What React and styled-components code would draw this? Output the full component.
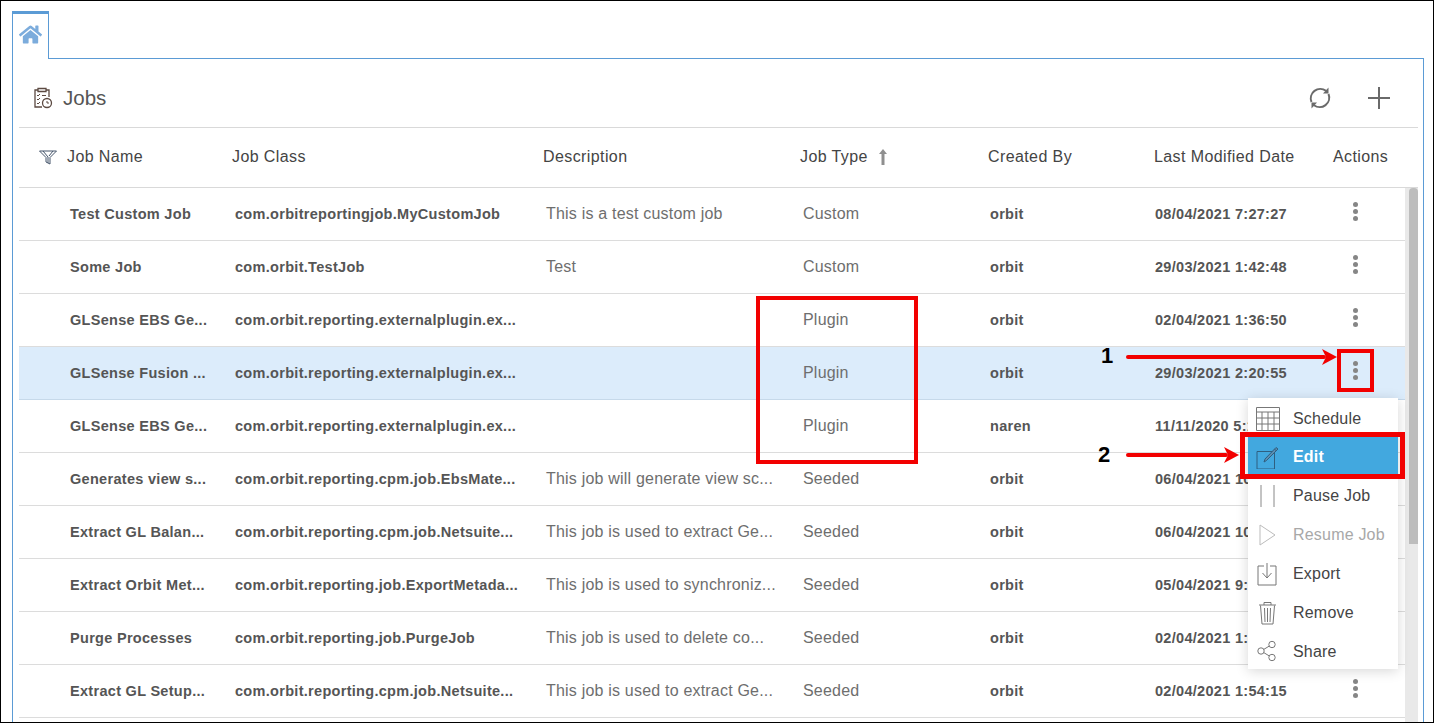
import styled, { createGlobalStyle } from 'styled-components'
import { FaHome } from 'react-icons/fa'

const GlobalStyle = createGlobalStyle`
  html, body { margin: 0; padding: 0; background: #fff; }
  * { box-sizing: border-box; }
`

const COLUMNS = '48px 165px 311px 257px 188px 166px 179px 1fr'
const RED = '#f20000'

const Page = styled.div`
  position: relative;
  width: 1434px;
  height: 723px;
  overflow: hidden;
  border: 1px solid #000;
  padding: 10px 9px 0 11px;
  font-family: "Liberation Sans", Arial, sans-serif;
  background: #fff;
`
const TabStrip = styled.div`
  display: flex;
  height: 48px;
`
const Tab = styled.div`
  position: relative;
  z-index: 1;
  width: 37px;
  height: 48px;
  background: #fff;
  border: 1px solid #5b9bd5;
  border-top-width: 3px;
  border-bottom: none;
  display: flex;
  justify-content: center;
  padding-top: 9px;
  color: #7cacdc;
  font-size: 23px;
`
const Panel = styled.div`
  margin-top: -1px;
  height: 680px;
  border: 1px solid #5b9bd5;
  border-bottom: none;
  padding: 0 5px 0 6px;
`
const TitleBar = styled.div`
  height: 69px;
  display: flex;
  align-items: center;
  border-bottom: 1px solid #d9d9d9;
  padding: 10px 27px 0 14px;
`
const Title = styled.h1`
  margin: 0 0 0 10px;
  font-size: 20.5px;
  font-weight: 400;
  color: #555;
  flex: 1;
`
const ToolButton = styled.span`
  display: flex;
  margin-left: 35px;
`
const HeaderRow = styled.div`
  display: grid;
  grid-template-columns: ${COLUMNS};
  height: 60px;
  align-items: center;
  border-bottom: 1px solid #d9d9d9;
  padding-bottom: 2px;
  font-size: 16px;
  letter-spacing: 0.4px;
  color: #444;
`
const FilterCell = styled.div`
  display: flex;
  justify-content: flex-end;
  padding: 2px 10px 0 0;
`
const HeadCell = styled.div`
  display: flex;
  align-items: center;
  gap: 10px;
  white-space: nowrap;
`
const Body = styled.div`
  display: flex;
  align-items: flex-start;
`
const Rows = styled.div`
  flex: 1;
  min-width: 0;
`
const Row = styled.div`
  display: grid;
  grid-template-columns: ${COLUMNS};
  height: 53px;
  align-items: center;
  border-bottom: 1px solid ${({ $active }) => ($active ? '#c6d9ea' : '#dcdcdc')};
  background: ${({ $active }) => ($active ? '#dcecfb' : 'transparent')};
`
const Cell = styled.div`
  padding-left: ${({ $inset = 3 }) => $inset}px;
  white-space: nowrap;
  overflow: hidden;
  font-size: 14.5px;
  font-weight: 700;
  letter-spacing: 0.3px;
  color: #555;
`
const PlainCell = styled(Cell)`
  font-size: 16px;
  font-weight: 400;
  letter-spacing: 0.2px;
  color: #6e6e6e;
`
const DotsCell = styled.div`
  display: flex;
  justify-content: flex-start;
  padding: 0 0 5px 20px;
`
const Dots = styled.span`
  display: flex;
  flex-direction: column;
  gap: 2px;
  i {
    width: 5px;
    height: 5px;
    border-radius: 50%;
    background: #868686;
  }
`
const ScrollTrack = styled.div`
  width: 13px;
  height: 535px;
  background: #e9e9e9;
  display: flex;
  justify-content: flex-end;
`
const ScrollThumb = styled.div`
  width: 9px;
  height: 356px;
  background: #bdbdbd;
  border-radius: 4px 4px 0 0;
`
const Menu = styled.div`
  position: absolute;
  left: 1247px;
  top: 397px;
  width: 150px;
  height: 271px;
  background: #fff;
  box-shadow: 0 2px 12px rgba(0, 0, 0, 0.16);
  z-index: 3;
`
const MenuItem = styled.div`
  height: ${({ $active }) => ($active ? '38px' : '39px')};
  display: flex;
  align-items: center;
  padding: ${({ $active }) => ($active ? '1px' : '2px')} 0 0 8px;
  gap: 13px;
  font-size: 16px;
  letter-spacing: 0.2px;
  font-weight: ${({ $active }) => ($active ? 700 : 400)};
  color: ${({ $active, $disabled }) => ($active ? '#fff' : $disabled ? '#a8a8a8' : '#444')};
  background: ${({ $active }) => ($active ? '#42a8df' : 'transparent')};
`
const MenuIcon = styled.span`
  width: 24px;
  height: 24px;
  display: flex;
  flex: none;
  color: ${({ $tone }) => $tone};
`
const RedBox = styled.div`
  position: absolute;
  left: ${({ $x }) => $x}px;
  top: ${({ $y }) => $y}px;
  width: ${({ $w }) => $w}px;
  height: ${({ $h }) => $h}px;
  border: ${({ $t }) => $t}px solid ${RED};
  z-index: 4;
`
const Arrow = styled.svg`
  position: absolute;
  left: ${({ $x }) => $x}px;
  top: ${({ $y }) => $y}px;
  z-index: 4;
`
const Marker = styled.span`
  position: absolute;
  left: ${({ $x }) => $x}px;
  top: ${({ $y }) => $y}px;
  font-size: 22px;
  line-height: 24px;
  font-weight: 700;
  color: #000;
  z-index: 4;
`

const ClipboardIcon = () => (
  <svg width="20" height="22" viewBox="0 0 20 22" fill="none" stroke="#5c4a42" strokeWidth="1.3">
    <path d="M5 3H2v17h7M13 3h3v7" />
    <path d="M5 1.500h8v3H5z" />
    <path d="M4 8l1 1 2-2M4 12l1 1 2-2M4 16l1 1 2-2M9 8.500h4" strokeWidth="1" />
    <circle cx="14" cy="16" r="4.500" />
    <path d="M14 14v2h2" strokeWidth="1" />
  </svg>
)
const RefreshIcon = () => (
  <svg width="24" height="24" viewBox="0 0 24 24" fill="none" stroke="#6a6a6a" strokeWidth="2">
    <path d="M3.500 16A9.500 9.500 0 0 1 18 4.800" />
    <path d="M20.500 8A9.500 9.500 0 0 1 6 19.200" />
    <path d="M20.500 1.500v6h-5.500z" fill="#6a6a6a" stroke="none" />
    <path d="M3.500 22.500v-6H9z" fill="#6a6a6a" stroke="none" />
  </svg>
)
const PlusIcon = () => (
  <svg width="24" height="24" viewBox="0 0 24 24" stroke="#6a6a6a" strokeWidth="2">
    <path d="M1 12h22M12 1v22" />
  </svg>
)
const FilterIcon = () => (
  <svg width="18" height="15" viewBox="0 0 18 15" fill="none" stroke="#44546a" strokeWidth="1">
    <path d="M.5 1h17l-6.500 6.500V14l-4-2V7.500z" />
    <path d="M4 1l5 6v6M14 1l-4 5" />
  </svg>
)
const SortUp = () => (
  <svg width="10" height="16" viewBox="0 0 10 16" fill="#8f8f8f">
    <path d="M5 0l4 5H6.500v11h-3V5H1z" />
  </svg>
)

const Glyph = ({ children }) => (
  <svg width="24" height="24" viewBox="0 0 24 24" fill="none" stroke="currentColor" strokeWidth="1">
    {children}
  </svg>
)

const menuItems = [
  {
    label: 'Schedule',
    tone: '#777',
    icon: <path d="M.5.500h23v23H.5zM.5 5h23M.5 11h23M.5 17h23M6 5v18.500M12 5v18.500M18 5v18.500" />,
  },
  {
    label: 'Edit',
    tone: '#2f5f80',
    active: true,
    icon: (
      <>
        <path d="M1 6.500h17.500V24H1z" />
        <path d="M8 17l1-3L20 2.500l2 1.500L10.500 15.500zM18.500 4l2 2" fill="#5b8fb3" />
      </>
    ),
  },
  { label: 'Pause Job', tone: '#888', icon: <path d="M5 1v22M18 1v22" /> },
  { label: 'Resume Job', tone: '#bbb', disabled: true, icon: <path d="M4 2l15 10L4 22z" /> },
  { label: 'Export', tone: '#777', icon: <path d="M8 4H2v19h18V4h-6M11 1v15M6.500 11l4.500 5 4.500-5" /> },
  {
    label: 'Remove',
    tone: '#777',
    icon: <path d="M3 4h17M8 4V1.500h7V4M4.500 4.500L6 23h11l1.500-18.500M8.500 7l.5 14M11.500 7v14M14.500 7l-.5 14" />,
  },
  {
    label: 'Share',
    tone: '#777',
    icon: (
      <>
        <circle cx="5" cy="11" r="3.200" />
        <circle cx="16" cy="4.500" r="3.200" />
        <circle cx="16" cy="17.500" r="3.200" />
        <path d="M7.800 9.400l5.400-3.300M7.800 12.600l5.400 3.300" />
      </>
    ),
  },
]

const jobs = [
  ['Test Custom Job', 'com.orbitreportingjob.MyCustomJob', 'This is a test custom job', 'Custom', 'orbit', '08/04/2021 7:27:27'],
  ['Some Job', 'com.orbit.TestJob', 'Test', 'Custom', 'orbit', '29/03/2021 1:42:48'],
  ['GLSense EBS Ge...', 'com.orbit.reporting.externalplugin.ex...', '', 'Plugin', 'orbit', '02/04/2021 1:36:50'],
  ['GLSense Fusion ...', 'com.orbit.reporting.externalplugin.ex...', '', 'Plugin', 'orbit', '29/03/2021 2:20:55'],
  ['GLSense EBS Ge...', 'com.orbit.reporting.externalplugin.ex...', '', 'Plugin', 'naren', '11/11/2020 5:12:40'],
  ['Generates view s...', 'com.orbit.reporting.cpm.job.EbsMate...', 'This job will generate view sc...', 'Seeded', 'orbit', '06/04/2021 10:12:31'],
  ['Extract GL Balan...', 'com.orbit.reporting.cpm.job.Netsuite...', 'This job is used to extract Ge...', 'Seeded', 'orbit', '06/04/2021 10:05:12'],
  ['Extract Orbit Met...', 'com.orbit.reporting.job.ExportMetada...', 'This job is used to synchroniz...', 'Seeded', 'orbit', '05/04/2021 9:20:44'],
  ['Purge Processes', 'com.orbit.reporting.job.PurgeJob', 'This job is used to delete co...', 'Seeded', 'orbit', '02/04/2021 1:54:30'],
  ['Extract GL Setup...', 'com.orbit.reporting.cpm.job.Netsuite...', 'This job is used to extract Ge...', 'Seeded', 'orbit', '02/04/2021 1:54:15'],
]

const RedArrow = ({ x, y, width }) => (
  <Arrow $x={x} $y={y} width={width} height="16" viewBox={`0 0 ${width} 16`}>
    <path d={`M2 8H${width - 13}`} stroke={RED} strokeWidth="4" strokeLinecap="round" />
    <path d={`M${width - 15} 0L${width} 8L${width - 15} 16L${width - 11} 8z`} fill={RED} />
  </Arrow>
)

const App = () => {
  return (
    <Page>
      <GlobalStyle />
      <TabStrip>
        <Tab><FaHome /></Tab>
      </TabStrip>
      <Panel>
        <TitleBar>
          <ClipboardIcon />
          <Title>Jobs</Title>
          <ToolButton><RefreshIcon /></ToolButton>
          <ToolButton><PlusIcon /></ToolButton>
        </TitleBar>
        <HeaderRow>
          <FilterCell><FilterIcon /></FilterCell>
          <HeadCell>Job Name</HeadCell>
          <HeadCell>Job Class</HeadCell>
          <HeadCell>Description</HeadCell>
          <HeadCell>Job Type <SortUp /></HeadCell>
          <HeadCell>Created By</HeadCell>
          <HeadCell>Last Modified Date</HeadCell>
          <HeadCell>Actions</HeadCell>
        </HeaderRow>
        <Body>
          <Rows>
            {jobs.map((job, i) => (
              <Row key={i} $active={i === 3}>
                <span />
                <Cell>{job[0]}</Cell>
                <Cell>{job[1]}</Cell>
                <PlainCell>{job[2]}</PlainCell>
                <PlainCell>{job[3]}</PlainCell>
                <Cell $inset={2}>{job[4]}</Cell>
                <Cell $inset={1}>{job[5]}</Cell>
                <DotsCell>
                  <Dots><i /><i /><i /></Dots>
                </DotsCell>
              </Row>
            ))}
          </Rows>
          <ScrollTrack><ScrollThumb /></ScrollTrack>
        </Body>
      </Panel>

      <Menu>
        {menuItems.map((item) => (
          <MenuItem key={item.label} $active={item.active} $disabled={item.disabled}>
            <MenuIcon $tone={item.tone}><Glyph>{item.icon}</Glyph></MenuIcon>
            {item.label}
          </MenuItem>
        ))}
      </Menu>

      <RedBox $x={755} $y={295} $w={162} $h={168} $t={4} />
      <RedBox $x={1336} $y={348} $w={37} $h={43} $t={4} />
      <RedBox $x={1239} $y={431} $w={165} $h={47} $t={5} />
      <RedArrow x={1125} y={348} width={211} />
      <RedArrow x={1125} y={446} width={113} />
      <Marker $x={1100} $y={343}>1</Marker>
      <Marker $x={1097} $y={442}>2</Marker>
    </Page>
  )
}

export default App
